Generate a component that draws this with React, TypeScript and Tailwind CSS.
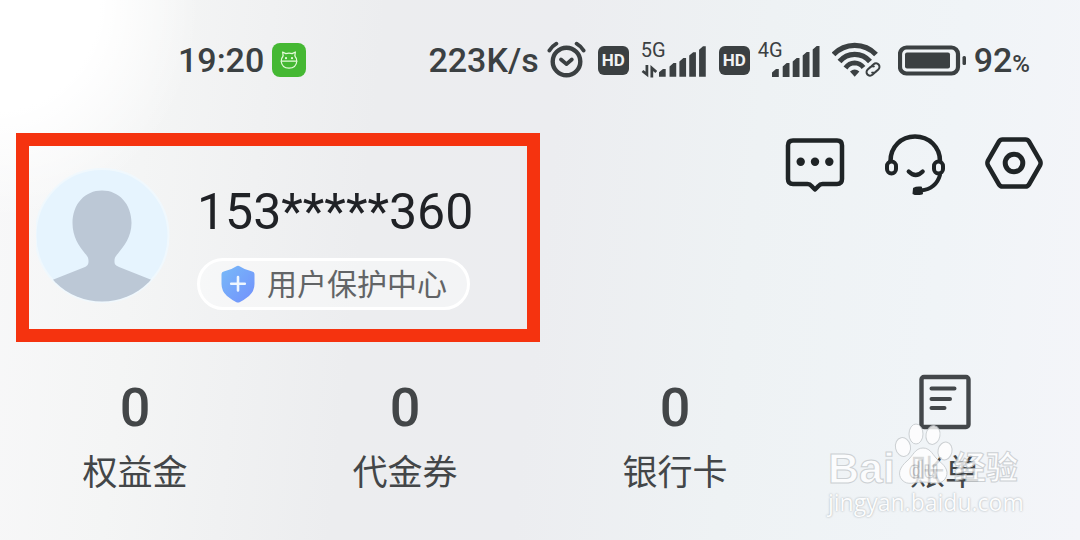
import React from 'react';

const INK = '#3b4042';

interface StatItem {
  id: string;
  label: string;
  value?: string;
}

const stats: StatItem[] = [
  { id: 'equity', label: '权益金', value: '0' },
  { id: 'voucher', label: '代金券', value: '0' },
  { id: 'cards', label: '银行卡', value: '0' },
  { id: 'bill', label: '账单' }
];

const AppBadge = () => (
  <span className="flex h-[34px] w-[34px] items-center justify-center rounded-lg bg-[#45b833]">
    <svg width="20" height="20" viewBox="0 0 20 20" fill="none" stroke="#e6fbdc" strokeWidth="1.2" strokeLinejoin="round">
      <path d="M4.2 6.2 3.6 2 6.8 3.6Q10 2.6 13.2 3.6L16.4 2 15.8 6.2" />
      <path d="M4.2 6Q2 8.5 2.2 11.2H17.8Q18 8.5 15.8 6" />
      <path d="M2.2 11.2Q2.8 18 10 18.2 17.2 18 17.8 11.2" />
      <circle cx="7" cy="8.2" r=".5" />
      <circle cx="13" cy="8.2" r=".5" />
    </svg>
  </span>
);

const AlarmIcon = () => (
  <svg width="39" height="38" viewBox="0 0 39 38" fill="none" stroke={INK} strokeLinecap="round">
    <circle cx="19.5" cy="20.5" r="13.8" strokeWidth="4.4" />
    <path d="M2.4 9.5Q4.8 5.4 9.4 2.7M29.6 2.7Q34.2 5.4 36.6 9.5" strokeWidth="3.8" />
    <path d="m14 18.5 5.5 4.6 5.3-4.6" strokeWidth="3.8" strokeLinejoin="round" />
  </svg>
);

const HdBadge = () => (
  <span className="flex h-[29px] w-[31px] items-center justify-center rounded-md bg-[#3b4042] text-[17px] leading-none font-bold text-[#f1f3f4]">
    HD
  </span>
);

const SignalIcon = ({ network, transfer }: { network: string; transfer?: boolean }) => (
  <span className={`relative flex h-9 items-end justify-end ${transfer ? 'w-[66px]' : 'w-[62px]'}`}>
    <span className="absolute top-0 left-0 text-xl leading-4 font-normal">{network}</span>
    {transfer && (
      <svg className="mr-0.5" width="17" height="13" viewBox="0 0 17 13" fill="none" stroke={INK} strokeWidth="2.8">
        <path d="M6 0v9.5L1.5 6M11 12.5V3l4.5 4" />
      </svg>
    )}
    <svg width="48" height="32" viewBox="0 0 48 32" fill={INK}>
      <path d="M0 31v-4.5l4-3.5h2.8v8zM10.7 31V20.5l4-3.5h2.8v14zM20.7 31V15.5l4-3.5h2.8v19zM30.7 31V9.5l4-3.5h2.8v25zM40.7 31V3.5l4-3.5h2.8v31z" />
    </svg>
  </span>
);

const WifiIcon = () => (
  <svg width="50" height="36" viewBox="0 0 50 36" fill="none" stroke={INK}>
    <path d="M1.5 12.5Q10 3.4 22.7 3.3 35.5 3.4 44 12.5" strokeWidth="5.2" />
    <path d="M7.5 19.5Q13.5 12.4 22.7 12.3 32 12.4 38 19.5" strokeWidth="5.2" />
    <path d="M13.5 26Q17 21 22.7 20.9 28 21 31.5 25.5" strokeWidth="4.8" />
    <path d="M18 29.5q4.7-4 9.4 0l-4.7 5.2z" fill={INK} stroke="none" />
    <g transform="rotate(-42 41 27.5)" strokeWidth="2">
      <path d="M40 31H37a3.5 3.5 0 0 1 0-7h4a3.5 3.5 0 0 1 3 2.5" />
      <path d="M42 24H45a3.5 3.5 0 0 1 0 7h-4a3.5 3.5 0 0 1-3-2.5" />
    </g>
  </svg>
);

const BatteryIcon = () => (
  <svg width="68" height="31" viewBox="0 0 68 31">
    <rect x="2" y="2.5" width="58" height="26" rx="6.5" fill="none" stroke={INK} strokeWidth="4.2" />
    <rect x="7" y="7.5" width="45" height="16" rx="2" fill={INK} />
    <rect x="64.5" y="11" width="3.5" height="9" rx="1.5" fill={INK} />
  </svg>
);

const Avatar = () => (
  <svg className="shrink-0" width="135" height="135" viewBox="0 0 135 135">
    <defs>
      <clipPath id="avatar-clip">
        <circle cx="67" cy="67.5" r="66" />
      </clipPath>
    </defs>
    <circle cx="66" cy="67.5" r="66.5" fill="#e6f4fe" stroke="#f0f8fd" strokeWidth="2" />
    <g clipPath="url(#avatar-clip)" transform="translate(-1)">
      <path
        d="M67 22.5C84 22.5 96.500 36 96.500 55 96.500 69 89 78 83 85.500 80 89 79.500 90 79.500 93 79.500 96 80 97 84 99L118 112.500 125 135H8L16 112.500 50 99C53 97.500 53.500 96 53.500 93 53.500 90 52.500 88 50 85.500 44 78 37.500 69 37.500 55 37.500 36 50 22.500 67 22.500Z"
        fill="#bcc8d6"
      />
    </g>
  </svg>
);

const ShieldIcon = () => (
  <svg width="34" height="38" viewBox="0 0 34 38">
    <defs>
      <linearGradient id="shield-fill" x1="0" y1="0" x2="1" y2="1">
        <stop offset="0" stopColor="#78baf8" />
        <stop offset="1" stopColor="#7290fc" />
      </linearGradient>
    </defs>
    <path
      d="M15 1.5Q17 .2 19 1.5 24 5 30.5 6.2 33.5 6.8 33.5 9.5V19Q33.5 26 28 31 23 35 19 37 17 38 15 37 11 35 6 31 .5 26 .5 19V9.5Q.5 6.8 3.5 6.2 10 5 15 1.5Z"
      fill="url(#shield-fill)"
    />
    <path d="M17 12v13.5M10.2 18.7h13.6" stroke="#eef6ff" strokeWidth="2.6" strokeLinecap="round" />
  </svg>
);

const MessageIcon = () => (
  <svg width="60" height="62" viewBox="0 0 60 62" fill="none" stroke="#1f2426" strokeWidth="4.5" strokeLinejoin="round">
    <path d="M8 7.5H52Q57 7.5 57 12.5V46Q57 51 52 51H37.5Q35 51 33.5 53L30 56.5 26.5 53Q25 51 22.5 51H8Q3 51 3 46V12.5Q3 7.5 8 7.5Z" />
    <g fill="#1f2426" stroke="none">
      <circle cx="15.7" cy="28.7" r="4.2" />
      <circle cx="30" cy="28.7" r="4.2" />
      <circle cx="44.3" cy="28.7" r="4.2" />
    </g>
  </svg>
);

const SupportIcon = () => (
  <svg width="60" height="62" viewBox="0 0 60 62" fill="none" stroke="#1f2426" strokeLinecap="round">
    <path d="M5.5 28C5.5 14 16 3.5 30 3.5S55 14 55 28" strokeWidth="4.5" />
    <rect x="2" y="28.5" width="9" height="12" rx="4.5" strokeWidth="4" />
    <rect x="49" y="28.5" width="9" height="12" rx="4.5" strokeWidth="4" />
    <path d="M55 42Q51 56 36 57.5" strokeWidth="4" />
    <path d="M29 55.5Q31.5 54 36 54.5L37 60.5Q31 62 28.5 60.5Z" fill="#1f2426" strokeWidth="2" strokeLinejoin="round" />
    <path d="M23.7 38.5Q30.7 45.5 37.7 38.5" strokeWidth="4.2" />
  </svg>
);

const SettingsIcon = () => (
  <svg width="60" height="62" viewBox="0 0 60 62" fill="none" stroke="#1f2426">
    <path
      d="M17.5 6.5H40.5Q42.8 6.5 44 8.5L55 27.5Q56.2 30 55 32.5L44 51.5Q42.8 53.5 40.5 53.5H17.5Q15.2 53.5 14 51.5L3 32.5Q1.8 30 3 27.5L14 8.5Q15.2 6.5 17.5 6.5Z"
      strokeWidth="4.5"
    />
    <circle cx="29" cy="30" r="8.8" strokeWidth="5" />
  </svg>
);

const BillIcon = () => (
  <svg width="53" height="56" viewBox="0 0 53 56" fill="none" stroke="#43474a" strokeLinecap="round">
    <rect x="2.5" y="3" width="47" height="50" rx="2.5" strokeWidth="4.4" />
    <path d="M12.5 14.5H35.5M12.5 25H31M12.5 34H25.5" strokeWidth="4" />
  </svg>
);

const Watermark = () => (
  <div className="pointer-events-none absolute right-[58px] bottom-[24px] w-[194px] opacity-80">
    <div className="relative flex h-[40px] items-center justify-between font-['Liberation_Sans','Noto_Sans_CJK_SC',sans-serif] font-bold text-white [-webkit-text-stroke:1px_#c4c8cb]">
      <span className="text-[43px] leading-10">Bai</span>
      <span className="mr-1 text-[32px] leading-10">经验</span>
      <svg className="absolute bottom-[3px] left-[66px]" width="60" height="62" viewBox="0 0 60 62" fill="#fff" stroke="#c4c8cb">
        <ellipse cx="9" cy="24" rx="7.5" ry="9.5" transform="rotate(-12 9 24)" />
        <ellipse cx="22" cy="11" rx="7" ry="10" />
        <ellipse cx="39" cy="12" rx="7" ry="9.5" transform="rotate(10 39 12)" />
        <ellipse cx="51" cy="28" rx="7" ry="9" transform="rotate(12 51 28)" />
        <path d="M29 25C37 25 39 33 45 38 53 44 55 50 51 56 46 63 38 59 29 59S14 63 8 57C3 51 6 44 13 38 19 33 21 25 29 25Z" />
        <text x="15" y="55" fontSize="24">du</text>
      </svg>
    </div>
    <p className="font-['Open_Sans',sans-serif] text-[23px] leading-7 text-white [text-shadow:0_0_2px_#8f9599]">jingyan.baidu.com</p>
  </div>
);

const StatusBar = () => (
  <header className="flex h-[120px] items-center justify-between pr-[50px] pl-[178px] font-[Roboto,sans-serif] text-[34px] leading-10 font-medium text-[#3b4042]">
    <div className="flex items-center gap-2">
      <time>19:20</time>
      <AppBadge />
    </div>
    <div className="flex items-center gap-3">
      <div className="flex items-center gap-2">
        <span>223K/s</span>
        <AlarmIcon />
      </div>
      <HdBadge />
      <SignalIcon network="5G" transfer />
      <div className="flex items-center gap-2">
        <HdBadge />
        <SignalIcon network="4G" />
      </div>
      <WifiIcon />
      <div className="ml-1 flex items-center gap-2">
        <BatteryIcon />
        <span>
          92<span className="text-2xl">%</span>
        </span>
      </div>
    </div>
  </header>
);

export default function App() {
  return (
    <div className="relative min-h-screen bg-[radial-gradient(ellipse_200px_220px_at_0_0,#ffffff_50%,transparent),linear-gradient(96deg,#f8f8f9_0%,#f4f5f5_14%,#ecedef_34%,#ecedf0_50%,#eef2f4_68%,#f0f4f7_85%,#f4f5f9_100%)] font-['Noto_Sans_CJK_SC',sans-serif]">
      <StatusBar />

      <main>
        <div className="flex items-start justify-between pt-[13px] pr-[35px] pl-4">
          <section className="flex w-[524px] items-start gap-[26px] border-[13px] border-[#f5330f] pt-[22px] pb-[19px] pl-[7px]">
            <Avatar />
            <div className="pt-[14px]">
              <h1 className="font-[Roboto,sans-serif] text-[50px] leading-[60px] text-[#202226]">153*****360</h1>
              <button
                type="button"
                className="mt-4 flex h-[52px] items-center gap-3 rounded-full border-[3px] border-white bg-white/40 pr-5 pl-[21px] text-[30px] leading-10 text-[#626466]"
              >
                <ShieldIcon />
                <span className="pb-1">用户保护中心</span>
              </button>
            </div>
          </section>

          <nav className="flex gap-10">
            <button type="button" aria-label="消息">
              <MessageIcon />
            </button>
            <button type="button" aria-label="客服">
              <SupportIcon />
            </button>
            <button type="button" aria-label="设置">
              <SettingsIcon />
            </button>
          </nav>
        </div>

        <section className="mt-8 grid grid-cols-4 text-[#434648]">
          {stats.map((item) => (
            <button key={item.id} type="button" className="flex flex-col items-center gap-1">
              <span className="block h-[68px] font-[Roboto,sans-serif] text-[54px] leading-[68px] font-medium">
                {item.value ?? <BillIcon />}
              </span>
              <span className="text-[35px] leading-[48px]">{item.label}</span>
            </button>
          ))}
        </section>
      </main>

      <Watermark />
    </div>
  );
}
